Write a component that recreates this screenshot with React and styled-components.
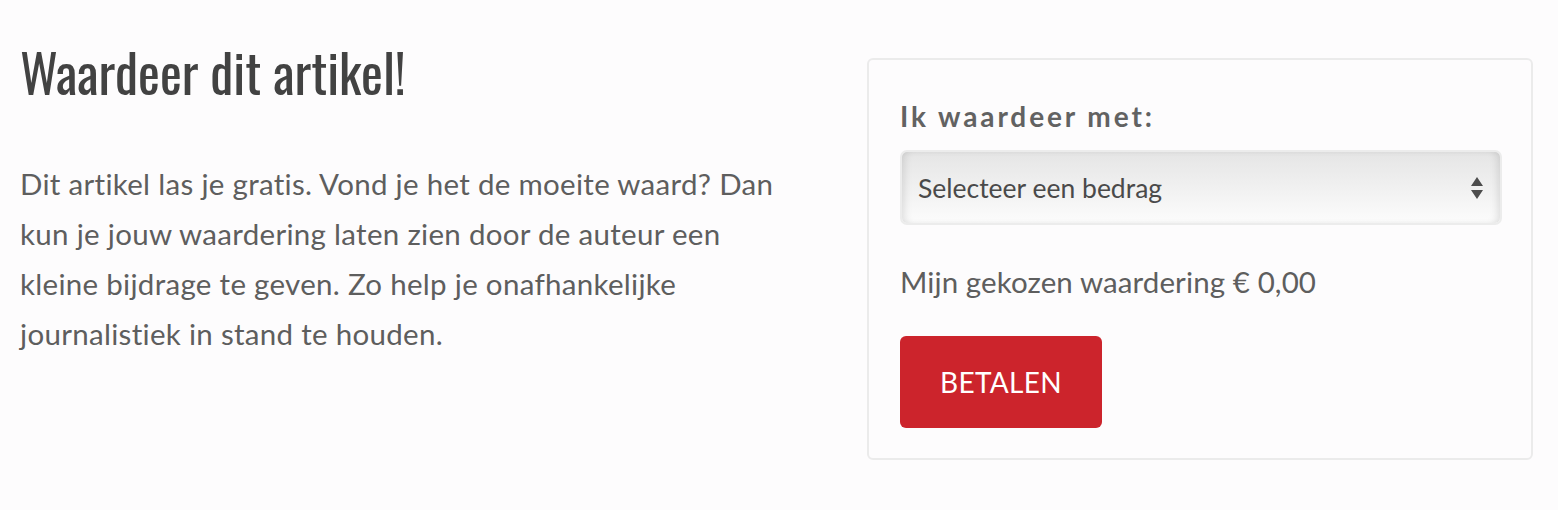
import React from "react";
import styled, { createGlobalStyle } from "styled-components";

const Global = createGlobalStyle`
  html, body { margin: 0; padding: 0; background: #fdfcfd; }
  body { font-family: "Source Sans Pro", "Lato", "Noto Sans", sans-serif; color: #5a5a5a; }
  * { box-sizing: border-box; }
`;

const Page = styled.div`
  display: flex;
  align-items: flex-start;
  padding: 40px 25px 0 20px;
`;

const Intro = styled.section`
  flex: 1;
`;

const Heading = styled.h2`
  margin: 0;
  font-family: "Oswald", "Liberation Sans Narrow", "DejaVu Sans Condensed", sans-serif;
  font-weight: 400;
  font-size: 52px;
  line-height: 64px;
  color: #424242;
`;

const Text = styled.p`
  margin: 55px 0 0;
  font-size: 29.5px;
  letter-spacing: 0.3px;
  line-height: 50px;
  color: #5e5e5e;
  max-width: 775px;
`;

const Card = styled.aside`
  width: 666px;
  margin-top: 18px;
  border: 2px solid #ebebeb;
  border-radius: 6px;
  background: #fdfcfd;
  padding: 39px 32px 30px 31px;
`;

const Label = styled.div`
  font-size: 28px;
  font-weight: 700;
  letter-spacing: 2.9px;
  color: #626262;
  line-height: 34px;
`;

const SelectBox = styled.div`
  margin-top: 17px;
  height: 75px;
  width: 602px;
  border: 2px solid #ececec;
  border-radius: 7px;
  background: linear-gradient(#e5e5e5, #fcfcfc);
  box-shadow: inset -6px 0 8px -4px rgba(0,0,0,0.12), inset 6px 0 8px -4px rgba(0,0,0,0.12);
  display: flex;
  align-items: center;
  justify-content: space-between;
  padding: 0 16px 0 16px;
  font-size: 26.5px;
  color: #4a4a4a;
`;

const Arrows = styled.svg`
  width: 14px;
  height: 28px;
`;

const Chosen = styled.div`
  margin-top: 37px;
  font-size: 29.5px;
  letter-spacing: 0.1px;
  color: #5e5e5e;
  line-height: 40px;
`;

const PayButton = styled.button`
  margin-top: 34px;
  display: block;
  width: 202px;
  height: 92px;
  border: none;
  border-radius: 6px;
  background: #cc242c;
  color: #ffffff;
  font-family: inherit;
  font-size: 28px;
  letter-spacing: 0.3px;
`;

export default function App() {
  return (
    <>
      <Global />
      <Page>
        <Intro>
          <Heading>Waardeer dit artikel!</Heading>
          <Text>
            Dit artikel las je gratis. Vond je het de moeite waard? Dan kun je jouw waardering laten zien door de auteur een kleine bijdrage te geven. Zo help je onafhankelijke journalistiek in stand te houden.
          </Text>
        </Intro>
        <Card>
          <Label>Ik waardeer met:</Label>
          <SelectBox>
            <span>Selecteer een bedrag</span>
            <Arrows viewBox="0 0 14 28">
              <path d="M7 3 L13 12 H1 Z M7 25 L13 16 H1 Z" fill="#4d4d4d" />
            </Arrows>
          </SelectBox>
          <Chosen>Mijn gekozen waardering € 0,00</Chosen>
          <PayButton>BETALEN</PayButton>
        </Card>
      </Page>
    </>
  );
}
